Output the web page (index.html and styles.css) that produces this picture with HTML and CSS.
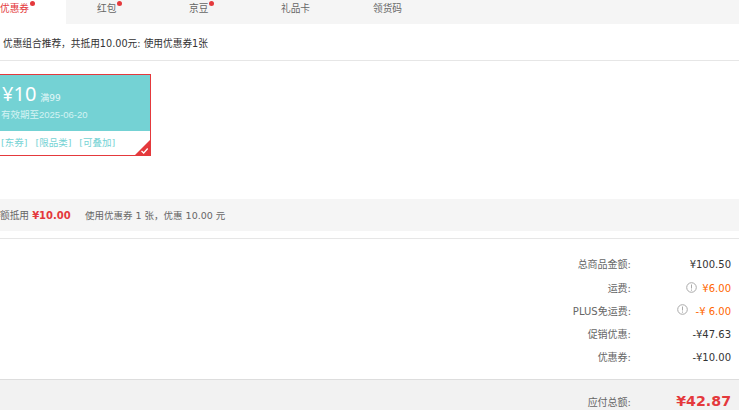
FILE: index.html
```html
<!DOCTYPE html>
<html lang="zh">
<head>
<meta charset="utf-8">
<title>优惠券</title>
<link rel="stylesheet" href="styles.css">
</head>
<body>
<div class="page">
  <nav class="tabs">
    <div class="tab tab-first">优惠券<i class="dot"></i></div>
    <div class="tab">红包<i class="dot"></i></div>
    <div class="tab">京豆<i class="dot"></i></div>
    <div class="tab">礼品卡</div>
    <div class="tab">领货码</div>
  </nav>
  <div class="recommend">优惠组合推荐，共抵用10.00元: 使用优惠券1张</div>
  <section class="coupons">
    <div class="coupon">
      <div class="coupon-top">
        <div class="coupon-price"><span class="amount">¥10</span><span class="limit">满99</span></div>
        <div class="coupon-date">有效期至2025-06-20</div>
      </div>
      <div class="coupon-tags"><span>[东券]</span><span>[限品类]</span><span>[可叠加]</span></div>
      <svg class="check" width="17" height="17" viewBox="0 0 17 17"><path d="M17 0V17H0Z" fill="#e4393c"/><path d="M7.500 12l2.200 2 4-4.500" fill="none" stroke="#fff" stroke-width="1.300"/></svg>
    </div>
  </section>
  <div class="deduct">
    <div class="deduct-label">额抵用 <b>¥10.00</b></div>
    <div class="deduct-note">使用优惠券 1 张，优惠 10.00 元</div>
  </div>
  <section class="summary">
    <div class="row"><span class="k">总商品金额:</span><span class="v">¥100.50</span></div>
    <div class="row"><span class="k">运费:</span><span class="v orange"><svg class="info" width="11" height="11" viewBox="0 0 11 11"><circle cx="5.500" cy="5.500" r="4.800" fill="none" stroke="#aaa"/><path d="M5.500 2.500v4M5.500 7.500v1.200" stroke="#aaa"/></svg>¥6.00</span></div>
    <div class="row"><span class="k">PLUS免运费:</span><span class="v orange"><svg class="info info-plus" width="11" height="11" viewBox="0 0 11 11"><circle cx="5.500" cy="5.500" r="4.800" fill="none" stroke="#aaa"/><path d="M5.500 2.500v4M5.500 7.500v1.200" stroke="#aaa"/></svg>-¥ 6.00</span></div>
    <div class="row"><span class="k">促销优惠:</span><span class="v">-¥47.63</span></div>
    <div class="row"><span class="k">优惠券:</span><span class="v">-¥10.00</span></div>
  </section>
  <footer class="total">
    <span class="total-k">应付总额:</span><span class="total-v">¥42.87</span>
  </footer>
</div>
</body>
</html>
```
FILE: styles.css
```css
* { box-sizing: border-box; }
html, body { margin: 0; padding: 0; }
body { background: #fff; font-family: "DejaVu Sans", "Noto Sans CJK SC", sans-serif; font-size: 9.700px; color: #666; overflow: hidden; }
.page { width: 739px; height: 410px; overflow: hidden; display: flex; flex-direction: column; }
.tabs { display: flex; height: 24px; background: #f5f5f5; flex: none; }
.tab { width: 92px; padding-left: 31px; line-height: 17px; color: #666; }
.tab-first { width: 66px; padding-left: 0; background: #fff; color: #e4393c; }
.dot { display: inline-block; width: 5px; height: 5px; border-radius: 50%; background: #e4393c; vertical-align: 6px; margin-left: 1px; }
.recommend { height: 37px; flex: none; padding-left: 3px; line-height: 39px; color: #333; border-bottom: 1px solid #e6e6e6; }
.coupons { height: 138px; flex: none; padding-top: 13px; }
.coupon { position: relative; width: 152px; height: 82px; margin-left: -1px; border: 1px solid #e4393c; }
.coupon-top { height: 56px; background: #74d2d4; color: #fff; padding: 6px 0 0 2px; }
.coupon-price { display: flex; align-items: baseline; height: 26px; }
.amount { font-size: 20px; line-height: 26px; font-family: "Noto Sans", "Noto Sans CJK SC", sans-serif; }
.limit { margin-left: 4px; font-size: 9px; color: #e4f7f8; }
.coupon-date { margin: 1px 0 0 -1px; font-family: "Liberation Sans", "Noto Sans CJK SC", sans-serif; font-size: 9.500px; line-height: 14px; color: #d4f2f3; }
.coupon-tags { display: flex; gap: 8px; padding: 5px 0 0 1px; font-size: 9.500px; line-height: 14px; color: #74d2d4; }
.check { position: absolute; right: -1px; bottom: -1px; display: block; }
.deduct { height: 32px; flex: none; display: flex; align-items: center; background: #f5f5f5; padding-bottom: 1px; }
.deduct-label { width: 85px; flex: none; white-space: nowrap; color: #666; }
.deduct-label b { font-size: 10px; color: #e4393c; }
.deduct-note { font-size: 9.500px; color: #666; white-space: nowrap; }
.summary { flex: none; height: 141px; margin-top: 7px; border-top: 1px solid #e6e6e6; padding-top: 18px; }
.row { display: flex; justify-content: flex-end; height: 23px; line-height: 16px; }
.row:first-child { height: 24px; }
.k { font-size: 10px; color: #666; white-space: nowrap; }
.v { width: 108px; text-align: right; padding-right: 8px; font-size: 10px; color: #333; white-space: nowrap; position: relative; }
.orange { color: #f60; }
.info { position: absolute; left: 55px; top: 1px; display: block; }
.info-plus { left: 46px; top: 0; }
.total { flex: none; height: 31px; background: #f2f2f2; border-top: 1px solid #ddd; display: flex; justify-content: flex-end; align-items: center; padding-top: 12px; }
.total-k { font-size: 10px; color: #666; white-space: nowrap; }
.total-v { width: 108px; padding-right: 8px; text-align: right; font: bold 14.200px/18px "DejaVu Sans", sans-serif; color: #e4393c; white-space: nowrap; }
```
